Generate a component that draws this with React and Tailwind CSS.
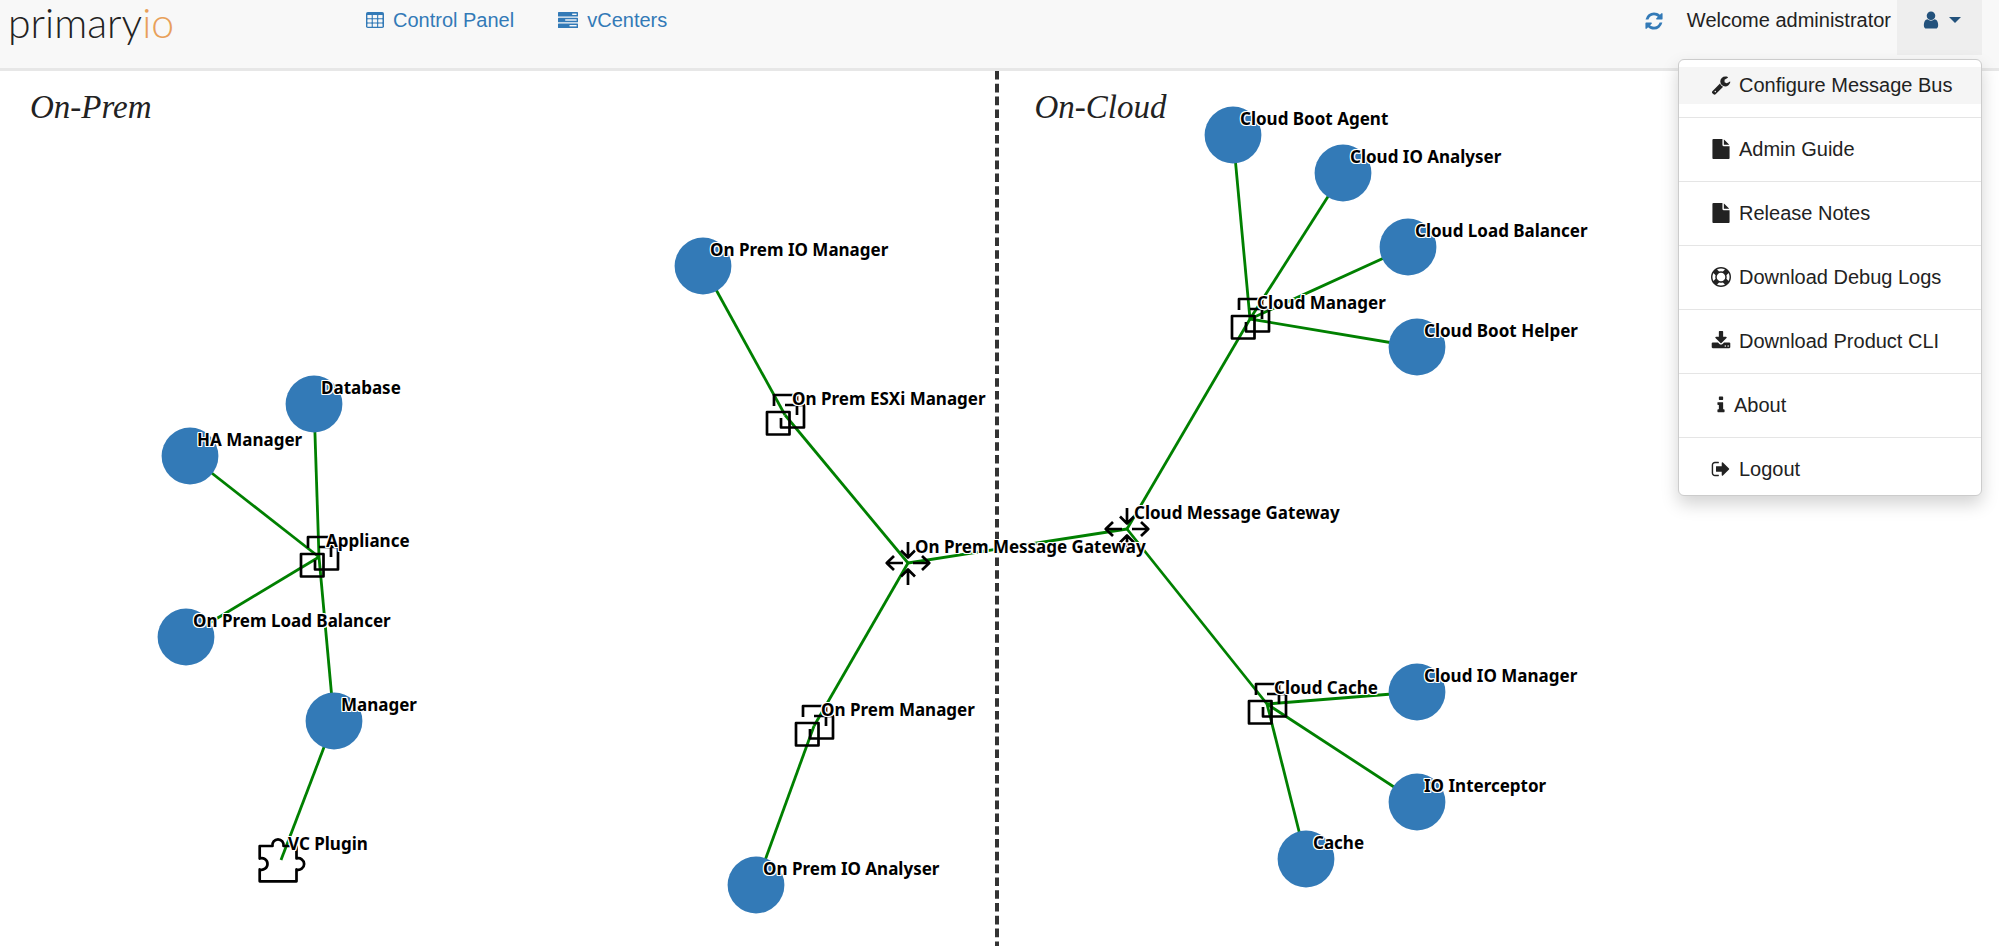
import React, { useState } from "react";

const GLYPHS = {
  user: "M1536 1399q0 109-62.5 187t-150.5 78h-854q-88 0-150.5-78t-62.5-187q0-85 8.5-160.5t31.5-152 58.5-131 94-89 134.5-34.5q131 128 313 128t313-128q76 0 134.5 34.5t94 89 58.5 131 31.5 152 8.5 160.5zm-256-887q0 159-112.5 271.5t-271.5 112.5-271.5-112.5-112.5-271.5 112.5-271.5 271.5-112.5 271.5 112.5 112.5 271.5z",
  refresh: "M1639 1056q0 5-1 7-64 268-268 434.5t-478 166.5q-146 0-282.5-55t-243.5-157l-129 129q-19 19-45 19t-45-19-19-45v-448q0-26 19-45t45-19h448q26 0 45 19t19 45-19 45l-137 137q71 66 161 102t187 36q134 0 250-65t186-179q11-17 53-117 8-23 30-23h192q13 0 22.5 9.5t9.5 22.5zm25-800v448q0 26-19 45t-45 19h-448q-26 0-45-19t-19-45 19-45l138-138q-148-137-349-137-134 0-250 65t-186 179q-11 17-53 117-8 23-30 23h-199q-13 0-22.5-9.5t-9.5-22.5v-7q65-268 270-434.5t480-166.5q146 0 284 55.5t245 156.5l130-129q19-19 45-19t45 19 19 45z",
  wrench: "M448 1472q0-26-19-45t-45-19-45 19-19 45 19 45 45 19 45-19 19-45zm644-420l-682 682q-37 37-90 37-52 0-91-37l-106-108q-38-36-38-90 0-53 38-91l681-681q39 98 114.5 173.5t173.5 114.5zm634-435q0 39-23 106-47 134-164.5 217.5t-258.5 83.5q-185 0-316.5-131.5t-131.5-316.5 131.5-316.5 316.5-131.5q58 0 121.5 16.5t107.5 46.5q16 11 16 28t-16 28l-293 169v224l193 107q5-3 79-48.5t135.5-81 70.5-35.5q15 0 23.5 10t8.5 25z",
  file: "M1152 512v-472q22 14 36 28l408 408q14 14 28 36h-472zm-128 32q0 40 28 68t68 28h544v1056q0 40-28 68t-68 28h-1344q-40 0-68-28t-28-68v-1600q0-40 28-68t68-28h800v544z",
  ring: "M896 0q182 0 348 71t286 191 191 286 71 348-71 348-191 286-286 191-348 71-348-71-286-191-191-286-71-348 71-348 191-286 286-191 348-71zm0 128q-190 0-361 90l194 194q82-28 167-28t167 28l194-194q-171-90-361-90zm-678 1129l194-194q-28-82-28-167t28-167l-194-194q-90 171-90 361t90 361zm678 407q190 0 361-90l-194-194q-82 28-167 28t-167-28l-194 194q171 90 361 90zm0-384q159 0 271.5-112.5t112.5-271.5-112.5-271.5-271.5-112.5-271.5 112.5-112.5 271.5 112.5 271.5 271.5 112.5zm484-217l194 194q90-171 90-361t-90-361l-194 194q28 82 28 167t-28 167z",
  download: "M1344 1344q0-26-19-45t-45-19-45 19-19 45 19 45 45 19 45-19 19-45zm256 0q0-26-19-45t-45-19-45 19-19 45 19 45 45 19 45-19 19-45zm128-224v320q0 40-28 68t-68 28h-1472q-40 0-68-28t-28-68v-320q0-40 28-68t68-28h465l135 136q58 56 136 56t136-56l136-136h464q40 0 68 28t28 68zm-325-569q17 41-14 70l-448 448q-18 19-45 19t-45-19l-448-448q-31-29-14-70 17-39 59-39h256v-448q0-26 19-45t45-19h256q26 0 45 19t19 45v448h256q42 0 59 39z",
  info: "M1216 1344v128q0 26-19 45t-45 19h-512q-26 0-45-19t-19-45v-128q0-26 19-45t45-19h64v-384h-64q-26 0-45-19t-19-45v-128q0-26 19-45t45-19h384q26 0 45 19t19 45v576h64q26 0 45 19t19 45zm-128-1152v192q0 26-19 45t-45 19h-256q-26 0-45-19t-19-45v-192q0-26 19-45t45-19h256q26 0 45 19t19 45z",
  signOut: "M704 1440q0 4 1 20t.5 26.5-3 23.5-10 19.5-20.5 6.5h-320q-119 0-203.5-84.5t-84.5-203.5v-704q0-119 84.5-203.5t203.5-84.5h320q13 0 22.5 9.5t9.5 22.5q0 4 1 20t.5 26.5-3 23.5-10 19.5-20.5 6.5h-320q-66 0-113 47t-47 113v704q0 66 47 113t113 47h312l11.5 1 11.5 3 8 5.5 7 9 2 13.5zm928-544q0 26-19 45l-544 544q-19 19-45 19t-45-19-19-45v-288h-448q-26 0-45-19t-19-45v-384q0-26 19-45t45-19h448v-288q0-26 19-45t45-19 45 19l544 544q19 19 19 45z",
};

function Glyph({ name, className = "w-5" }) {
  const box = name === "info" ? "0 0 1344 1792" : "0 0 1792 1792";
  return (
    <svg viewBox={box} className={`h-5 shrink-0 fill-current ${className}`} aria-hidden="true">
      <path d={GLYPHS[name]} />
    </svg>
  );
}

function TableIcon() {
  return (
    <svg viewBox="0 0 18 16" className="h-4 w-[18px] shrink-0" aria-hidden="true">
      <rect width="18" height="16" rx="1.8" fill="currentColor" />
      <g fill="#f8f8f8">
        {[3, 7.3, 11.6].map((y) =>
          [1.4, 6.8, 12.2].map((x) => <rect key={`${x}-${y}`} x={x} y={y} width="4.3" height="3.2" rx="0.4" />)
        )}
      </g>
    </svg>
  );
}

function ServerIcon() {
  return (
    <svg viewBox="0 0 20 16" className="h-4 w-5 shrink-0" aria-hidden="true">
      <g fill="currentColor">
        <rect y="0" width="20" height="4.6" rx="0.6" />
        <rect y="5.7" width="20" height="4.6" rx="0.6" />
        <rect y="11.4" width="20" height="4.6" rx="0.6" />
      </g>
      <g fill="#f8f8f8">
        <rect x="14.2" y="1.6" width="4.4" height="1.4" />
        <rect x="7.2" y="7.3" width="11.4" height="1.4" />
        <rect x="11.5" y="13" width="7.1" height="1.4" />
      </g>
    </svg>
  );
}

const MENU = [
  { label: "Configure Message Bus", icon: "wrench", active: true },
  { label: "Admin Guide", icon: "file" },
  { label: "Release Notes", icon: "file" },
  { label: "Download Debug Logs", icon: "ring" },
  { label: "Download Product CLI", icon: "download" },
  { label: "About", icon: "info" },
  { label: "Logout", icon: "signOut" },
];

// Node positions on the topology canvas, measured from its top left corner.
const NODES = {
  database: { x: 314, y: 333, label: "Database" },
  ha: { x: 190, y: 385, label: "HA Manager" },
  premLb: { x: 186, y: 566, label: "On Prem Load Balancer" },
  manager: { x: 334, y: 650, label: "Manager" },
  premIoManager: { x: 703, y: 195, label: "On Prem IO Manager" },
  premIoAnalyser: { x: 756, y: 814, label: "On Prem IO Analyser" },
  bootAgent: { x: 1233, y: 64, label: "Cloud Boot Agent" },
  cloudIoAnalyser: { x: 1343, y: 102, label: "Cloud IO Analyser" },
  cloudLb: { x: 1408, y: 176, label: "Cloud Load Balancer" },
  bootHelper: { x: 1417, y: 276, label: "Cloud Boot Helper" },
  cloudIoManager: { x: 1417, y: 621, label: "Cloud IO Manager" },
  interceptor: { x: 1417, y: 731, label: "IO Interceptor" },
  cache: { x: 1306, y: 788, label: "Cache" },
  appliance: { x: 319, y: 486, label: "Appliance", kind: "stack" },
  esxi: { x: 785, y: 344, label: "On Prem ESXi Manager", kind: "stack" },
  premManager: { x: 814, y: 655, label: "On Prem Manager", kind: "stack" },
  cloudManager: { x: 1250, y: 248, label: "Cloud Manager", kind: "stack" },
  cloudCache: { x: 1267, y: 633, label: "Cloud Cache", kind: "stack" },
  premGateway: { x: 908, y: 492, label: "On Prem Message Gateway", kind: "gateway" },
  cloudGateway: { x: 1127, y: 458, label: "Cloud Message Gateway", kind: "gateway" },
  plugin: { x: 281, y: 789, label: "VC Plugin", kind: "plugin" },
};

const LINKS = [
  ["database", "appliance"],
  ["ha", "appliance"],
  ["premLb", "appliance"],
  ["appliance", "manager"],
  ["manager", "plugin"],
  ["premIoManager", "esxi"],
  ["esxi", "premGateway"],
  ["premGateway", "premManager"],
  ["premManager", "premIoAnalyser"],
  ["premGateway", "cloudGateway"],
  ["cloudGateway", "cloudManager"],
  ["cloudGateway", "cloudCache"],
  ["cloudManager", "bootAgent"],
  ["cloudManager", "cloudIoAnalyser"],
  ["cloudManager", "cloudLb"],
  ["cloudManager", "bootHelper"],
  ["cloudCache", "cloudIoManager"],
  ["cloudCache", "interceptor"],
  ["cloudCache", "cache"],
];

const SHAPES = {
  stack: "M-18-3H4.5V19.5H-18ZM-11-9V-20H12V0M0-10H19V12.5H-4V3",
  gateway:
    "M-5 0H-21M-14-7L-21.3 0L-14 7M5 0H21M14-7L21.3 0L14 7M0-21V-6M-7-12.5L0-5.5L7-12.5M0 22V7M-7 13.5L0 6.5L7 13.5",
  plugin:
    "M-21.3-14H-8.5A5.6 5.6 0 1 1 2.5-14H15.5V-1.5A5.8 5.8 0 1 1 15.5 9.5V21.3H-21.3V9.4A5.8 5.8 0 1 0-21.3-1.5Z",
};

function Topology() {
  const nodes = Object.entries(NODES);
  return (
    <div className="absolute inset-0 overflow-hidden">
      <svg className="h-full w-full" role="img" aria-label="Service topology">
        <g stroke="#008000" strokeWidth="2.8">
          {LINKS.map(([a, b]) => (
            <line key={a + b} x1={NODES[a].x} y1={NODES[a].y} x2={NODES[b].x} y2={NODES[b].y} />
          ))}
        </g>
        {nodes.map(([id, n]) =>
          n.kind ? (
            <path
              key={id}
              d={SHAPES[n.kind]}
              transform={`translate(${n.x} ${n.y})`}
              fill="none"
              stroke="#000"
              strokeWidth="2.7"
              strokeLinejoin="round"
            />
          ) : (
            <circle key={id} cx={n.x} cy={n.y} r="28.4" fill="#337ab7" />
          )
        )}
      </svg>
      {nodes.map(([id, n]) => (
        <span
          key={id}
          className="absolute whitespace-nowrap font-['Noto_Sans','Open_Sans',sans-serif] text-[17px] leading-6 font-bold text-black [text-shadow:0_1px_0_#fff,1px_0_0_#fff,0_-1px_0_#fff,-1px_0_0_#fff,1px_1px_0_#fff,-1px_-1px_0_#fff,1px_-1px_0_#fff,-1px_1px_0_#fff]"
          style={{ left: n.x + 7, top: n.y - 28 }}
        >
          {n.label}
        </span>
      ))}
    </div>
  );
}

export default function App() {
  const [open, setOpen] = useState(true);
  return (
    <div className="flex min-h-screen flex-col bg-white font-['Liberation_Sans',Arial,sans-serif] text-xl leading-7 text-[#222]">
      <header className="relative z-10 flex h-[71px] items-start border-b-[3px] border-[#e7e7e7] bg-[#f8f8f8]">
        <a
          href="#home"
          className="w-[366px] shrink-0 pl-2 font-['Lato',sans-serif] text-[41px] leading-[46px] font-light text-[#222]"
        >
          primary<span className="text-[#e8a05a]">io</span>
        </a>
        <nav className="flex gap-11 pt-[6px] text-[#337ab7]">
          <a href="#control-panel" className="flex items-center gap-[9px]">
            <TableIcon />
            Control Panel
          </a>
          <a href="#vcenters" className="flex items-center gap-[9px]">
            <ServerIcon />
            vCenters
          </a>
        </nav>
        <div className="ml-auto flex items-start pr-[17px]">
          <button type="button" aria-label="Refresh" className="mt-[6px] flex h-7 items-center pt-[2px] text-[#337ab7]">
            <Glyph name="refresh" />
          </button>
          <span className="pt-[6px] pr-[6px] pl-[23px]">Welcome administrator</span>
          <div className="relative">
            <button
              type="button"
              aria-label="User menu"
              aria-expanded={open}
              onClick={() => setOpen(!open)}
              className="flex h-[55px] w-[85px] items-start justify-center gap-2 bg-[#eee] pt-[10px] pl-[2px] text-[#23527c]"
            >
              <Glyph name="user" />
              <svg viewBox="0 0 12 20" className="h-5 w-3 fill-current" aria-hidden="true">
                <path d="M0 7H12L6 13Z" />
              </svg>
            </button>
            {open && (
              <ul className="absolute top-[59px] right-0 w-[304px] rounded-md border border-[#ccc] bg-white py-[7px] shadow-[0_8px_17px_rgba(0,0,0,0.175)]">
                {MENU.map((item, i) => (
                  <li key={item.label} className={i ? "mt-[13px] border-t border-[#e5e5e5] pt-[13px]" : ""}>
                    <a
                      href="#menu"
                      className={`flex h-[37px] items-center gap-2 pb-[2px] pl-8 ${item.active ? "bg-[#f5f5f5]" : ""}`}
                    >
                      <Glyph name={item.icon} className={item.icon === "info" ? "w-[15px]" : "w-5"} />
                      {item.label}
                    </a>
                  </li>
                ))}
              </ul>
            )}
          </div>
        </div>
      </header>
      <main className="relative grid min-h-[875px] flex-1 grid-cols-2">
        <section className="flex justify-between pr-px">
          <h2 className="pt-4 pl-[30px] font-['Liberation_Serif',serif] text-[33px] leading-10 italic">On-Prem</h2>
          <svg className="h-full w-1" aria-hidden="true">
            <line x1="2" y1="0" x2="2" y2="100%" stroke="#333" strokeWidth="4" strokeDasharray="8.6 4.2" />
          </svg>
        </section>
        <section>
          <h2 className="pt-4 pl-[35px] font-['Liberation_Serif',serif] text-[33px] leading-10 italic">On-Cloud</h2>
        </section>
        <Topology />
      </main>
    </div>
  );
}
